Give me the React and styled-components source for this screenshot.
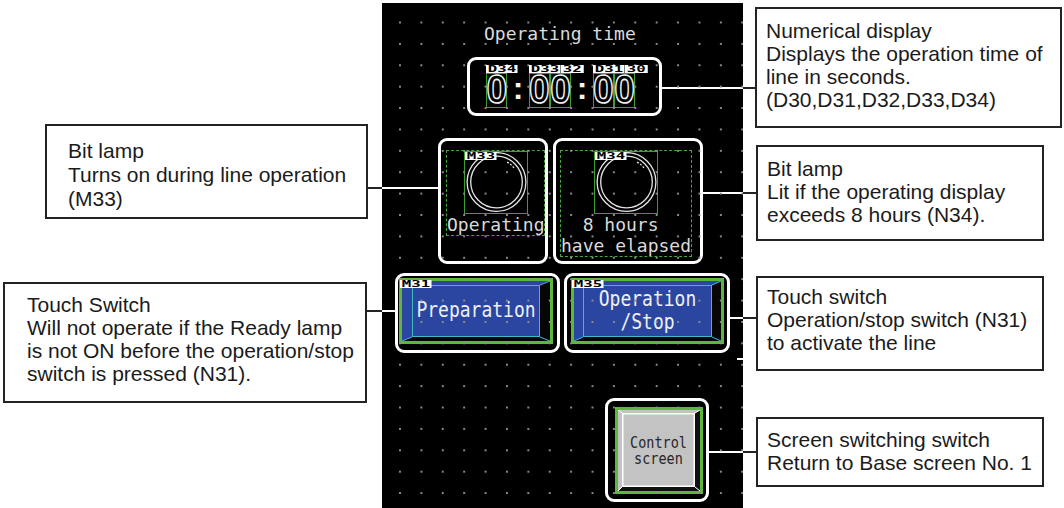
import React from 'react';
import styled, { createGlobalStyle } from 'styled-components';

const GlobalStyle = createGlobalStyle`
  html, body { margin: 0; padding: 0; background: #ffffff; }
  #root { width: 1064px; height: 508px; }
`;

const Page = styled.div`
  width: 1064px;
  height: 508px;
  overflow: hidden;
  background: #ffffff;
  display: grid;
  grid-template-columns: 382px 361px 321px;
  align-items: start;
`;

/* ---------- callout notes ---------- */

const NoteColumn = styled.div`
  display: flex;
  flex-direction: column;
  align-items: flex-start;
`;

const Note = styled.div`
  position: relative;
  box-sizing: border-box;
  width: ${p => p.$w}px;
  height: ${p => p.$h}px;
  margin: ${p => p.$mt}px 0 0 ${p => p.$ml}px;
  padding: ${p => p.$pt}px 0 0 ${p => p.$pl}px;
  border: 2px solid #232323;
  background: #ffffff;
  font-family: "Liberation Sans", Arial, sans-serif;
  font-size: 21px;
  line-height: ${p => p.$lh || 23}px;
  color: #1b1b1b;
  white-space: nowrap;

  &::after {
    content: "";
    position: absolute;
    top: ${p => p.$leadY}px;
    ${p => (p.$exit === 'right' ? 'left: calc(100% + 2px);' : 'right: calc(100% + 2px);')}
    width: ${p => p.$leadLen}px;
    height: 2px;
    background: #232323;
  }
`;

const NoteLine = styled.div``;

/* ---------- HMI screen ---------- */

const Panel = styled.div`
  position: relative;
  margin-top: 3px;
  height: 505px;
  background: #000000;
  display: flex;
  flex-direction: column;
  align-items: flex-start;
  font-family: "DejaVu Sans Mono", "Liberation Mono", monospace;
  color: #dadada;

  &::before {
    content: "";
    position: absolute;
    inset: 0;
    z-index: 2;
    pointer-events: none;
    background-image: radial-gradient(circle, #8c8c8c 0 0.9px, transparent 1.2px);
    background-size: 21.4px 21.4px;
    background-position: 7.3px 8.8px;
  }
`;

const ScreenTitle = styled.div`
  margin: 20px 0 0 102px;
  font-size: 18px;
  line-height: 21.33px;
  white-space: pre;
`;

const Slot = styled.div`
  position: relative;
  display: flex;
  align-items: flex-start;
  gap: ${p => p.$gap || 0}px;
  margin: ${p => p.$mt}px 0 0 ${p => p.$ml}px;

  ${p =>
    p.$stub
      ? `&::after {
    content: "";
    position: absolute;
    left: 342px;
    top: 85px;
    width: 6px;
    height: 2px;
    background: #ffffff;
  }`
      : ''}
`;

const Highlight = styled.div`
  position: relative;
  box-sizing: border-box;
  width: ${p => p.$w}px;
  height: ${p => p.$h}px;
  border: 3px solid #ffffff;
  border-radius: 9px;
  padding: ${p => p.$pad};
  display: flex;
  flex-direction: column;
  align-items: flex-start;

  &::after {
    content: "";
    position: absolute;
    top: ${p => p.$leadY}px;
    ${p => (p.$exit === 'right' ? 'left: calc(100% + 3px);' : 'right: calc(100% + 3px);')}
    width: ${p => p.$leadLen}px;
    height: 2px;
    background: #ffffff;
  }
`;

const Tag = styled.span`
  position: absolute;
  left: ${p => p.$x}px;
  top: ${p => p.$y}px;
  z-index: ${p => p.$z || 3};
  height: 8px;
  padding: 0 1px;
  background: #ffffff;
  color: #000000;
  font-family: "DejaVu Sans Mono", monospace;
  font-weight: bold;
  font-size: 9px;
  line-height: 8px;
  white-space: nowrap;
  transform: scaleX(1.75);
  transform-origin: left top;
`;

/* numerical display */

const DigitRow = styled.div`
  display: flex;
  align-items: flex-start;
`;

const DigitCell = styled.div`
  position: relative;
  box-sizing: border-box;
  width: 21.33px;
  height: 35px;
  border: 1px solid #3d9e33;
  display: flex;
  justify-content: center;
  align-items: flex-start;
`;

const DigitGlyph = styled.span`
  display: block;
  font-family: "Liberation Sans", Arial, sans-serif;
  font-weight: bold;
  font-size: 37px;
  line-height: 28px;
  color: transparent;
  -webkit-text-stroke: 1.4px #f2f2f2;
  transform: scaleY(1.1);
  transform-origin: center top;
`;

const ColonCell = styled.div`
  width: 21.33px;
  height: 35px;
  display: flex;
  justify-content: center;
  align-items: flex-start;
`;

const ColonGlyph = styled.span`
  display: block;
  margin-top: -1px;
  font-family: "Liberation Sans", Arial, sans-serif;
  font-weight: bold;
  font-size: 32px;
  line-height: 32px;
  color: #f4f4f4;
`;

/* lamps */

const LampFrame = styled.div`
  box-sizing: border-box;
  width: ${p => p.$w}px;
  height: ${p => p.$h}px;
  border: 1px dashed #45a83a;
  display: flex;
  flex-direction: column;
`;

const LampBody = styled.div`
  position: relative;
  align-self: center;
  box-sizing: border-box;
  width: 64px;
  height: 63px;
  border: 1px solid #3d9e33;
`;

const RingSvg = styled.svg`
  display: block;
`;

const LampCaption = styled.div`
  font-size: 18px;
  line-height: 21.33px;
  white-space: pre;
`;

/* touch switches */

const GreenFrame = styled.div`
  position: relative;
  box-sizing: border-box;
  width: ${p => p.$w}px;
  height: ${p => p.$h}px;
  border: 3px solid #5bb83b;
`;

const Bevel = styled.div`
  position: relative;
  ${p => (p.$raise ? 'z-index: 3;' : '')}
  box-sizing: border-box;
  width: 100%;
  height: 100%;
  padding: ${p => p.$pad};
  background: ${p => p.$face};
  display: flex;
`;

const BevelSvg = styled.svg`
  position: absolute;
  left: 0;
  top: 0;
  display: block;
`;

const FaceText = styled.div`
  position: relative;
  flex: 1;
  display: flex;
  align-items: center;
  justify-content: center;
  text-align: center;
  white-space: pre;
`;

const FaceLabel = styled.span`
  display: block;
  font-size: ${p => p.$size}px;
  line-height: ${p => p.$lh}px;
  color: ${p => p.$color};
  transform: scaleY(${p => p.$sy});
`;

const BevelArt = ({ w, h, l, t, r, b, dark, line, lw }) => (
  <BevelSvg width={w} height={h} viewBox={`0 0 ${w} ${h}`}>
    <polygon points={`${w},0 ${w},${h} ${w - r},${h - b} ${w - r},${t}`} fill={dark} />
    <polygon points={`0,${h} ${l},${h - b} ${w - r},${h - b} ${w},${h}`} fill={dark} />
    <rect
      x={l + lw / 2}
      y={t + lw / 2}
      width={w - l - r - lw}
      height={h - t - b - lw}
      fill="none"
      stroke={line}
      strokeWidth={lw}
    />
    <g stroke={line} strokeWidth="1">
      <line x1="0" y1="0" x2={l} y2={t} />
      <line x1={w} y1="0" x2={w - r} y2={t} />
      <line x1="0" y1={h} x2={l} y2={h - b} />
      <line x1={w} y1={h} x2={w - r} y2={h - b} />
    </g>
  </BevelSvg>
);

const LampRing = () => (
  <RingSvg width="62" height="61" viewBox="0 0 62 61">
    <circle cx="31.5" cy="30" r="29.4" fill="none" stroke="#e4e4e4" strokeWidth="1.3" />
    <circle cx="31.5" cy="30" r="25.8" fill="none" stroke="#e4e4e4" strokeWidth="1.3" />
    <path
      d="M42.1 10.1 A22.5 22.5 0 0 1 49.2 16.2"
      fill="none"
      stroke="#e4e4e4"
      strokeWidth="1.3"
      strokeDasharray="2 1.5"
    />
  </RingSvg>
);

const Lamp = ({ w, h, tag, caption }) => (
  <LampFrame $w={w} $h={h}>
    <LampBody>
      <LampRing />
      <Tag $x={0} $y={0}>{tag}</Tag>
    </LampBody>
    <LampCaption>{caption}</LampCaption>
  </LampFrame>
);

/* device tags over the digit cells; where two tags overlap in the
   screen, the covered one only shows its visible tail */
const digits = [
  { kind: 'digit', tag: 'D34', x: -1 },
  { kind: 'colon' },
  { kind: 'digit', tag: 'D33', x: -1 },
  { kind: 'digit', tag: '32', x: 10 },
  { kind: 'colon' },
  { kind: 'digit', tag: 'D31', x: -1 },
  { kind: 'digit', tag: '30', x: 10 },
];

const blueBevel = { dark: '#060606', line: '#42b7c6', lw: 1 };

export default function App() {
  return (
    <>
      <GlobalStyle />
      <Page>
        <NoteColumn>
          <Note $w={323} $h={95} $mt={124} $ml={45} $pt={13} $pl={21} $lh={24}
            $exit="right" $leadY={61} $leadLen={14}>
            <NoteLine>Bit lamp</NoteLine>
            <NoteLine>Turns on during line operation</NoteLine>
            <NoteLine>(M33)</NoteLine>
          </Note>
          <Note $w={364} $h={121} $mt={63} $ml={3} $pt={9} $pl={22}
            $exit="right" $leadY={26} $leadLen={15}>
            <NoteLine>Touch Switch</NoteLine>
            <NoteLine>Will not operate if the Ready lamp</NoteLine>
            <NoteLine>is not ON before the operation/stop</NoteLine>
            <NoteLine>switch is pressed (N31).</NoteLine>
          </Note>
        </NoteColumn>

        <Panel>
          <ScreenTitle>Operating time</ScreenTitle>

          <Slot $mt={12.5} $ml={85}>
            <Highlight $w={195} $h={59} $pad="13px 0 0 16px" $exit="right" $leadY={27} $leadLen={81}>
              <DigitRow>
                {digits.map((d, i) =>
                  d.kind === 'colon' ? (
                    <ColonCell key={i}>
                      <ColonGlyph>:</ColonGlyph>
                    </ColonCell>
                  ) : (
                    <DigitCell key={i}>
                      <DigitGlyph>0</DigitGlyph>
                      <Tag $x={d.x} $y={-9}>{d.tag}</Tag>
                    </DigitCell>
                  )
                )}
              </DigitRow>
            </Highlight>
          </Slot>

          <Slot $mt={22} $ml={56} $gap={5}>
            <Highlight $w={110} $h={126} $pad="9px 0 0 5px" $exit="left" $leadY={46} $leadLen={56}>
              <Lamp w={99} h={86} tag="M33" caption="Operating" />
            </Highlight>
            <Highlight $w={150} $h={126} $pad="9px 0 0 4px" $exit="right" $leadY={51} $leadLen={40}>
              <Lamp w={132} h={107} tag="M34" caption={'  8 hours\nhave elapsed'} />
            </Highlight>
          </Slot>

          <Slot $mt={9} $ml={13} $gap={4} $stub>
            <Highlight $w={165} $h={80} $pad="2px 0 0 1px" $exit="left" $leadY={34} $leadLen={13}>
              <GreenFrame $w={154} $h={66}>
                <Bevel $pad="4px 10px 4px 10px" $face="#2a46a1">
                  <BevelArt w={148} h={60} l={10} t={4} r={10} b={4} {...blueBevel} />
                  <FaceText>
                    <FaceLabel $size={18} $lh={18.67} $sy={1.18} $color="#f0f0f0">Preparation</FaceLabel>
                  </FaceText>
                </Bevel>
                <Tag $x={-2} $y={-1}>M31</Tag>
              </GreenFrame>
            </Highlight>
            <Highlight $w={166} $h={80} $pad="2px 0 0 4px" $exit="right" $leadY={41} $leadLen={13}>
              <GreenFrame $w={153} $h={66}>
                <Bevel $pad="4px 9px 4px 9px" $face="#2a46a1">
                  <BevelArt w={147} h={60} l={9} t={4} r={9} b={4} {...blueBevel} />
                  <FaceText>
                    <FaceLabel $size={18} $lh={18.67} $sy={1.18} $color="#f0f0f0">{'Operation\n/Stop'}</FaceLabel>
                  </FaceText>
                </Bevel>
                <Tag $x={-2} $y={-1}>M35</Tag>
              </GreenFrame>
            </Highlight>
          </Slot>

          <Slot $mt={45} $ml={223}>
            <Highlight $w={104} $h={104} $pad="6px 0 0 7px" $exit="right" $leadY={50} $leadLen={34}>
              <GreenFrame $w={88} $h={87}>
                <Bevel $pad="3px 5px 4px 4px" $face="#c3c3c3" $raise>
                  <BevelArt w={82} h={81} l={4} t={3} r={5} b={4} dark="#101010" line="#ffffff" lw={1.5} />
                  <FaceText>
                    <FaceLabel $size={13.5} $lh={14.2} $sy={1.2} $color="#262626">{'Control\nscreen'}</FaceLabel>
                  </FaceText>
                </Bevel>
              </GreenFrame>
            </Highlight>
          </Slot>
        </Panel>

        <NoteColumn>
          <Note $w={307} $h={121} $mt={7} $ml={12} $pt={10} $pl={9}
            $exit="left" $leadY={78} $leadLen={12}>
            <NoteLine>Numerical display</NoteLine>
            <NoteLine>Displays the operation time of</NoteLine>
            <NoteLine>line in seconds.</NoteLine>
            <NoteLine>(D30,D31,D32,D33,D34)</NoteLine>
          </Note>
          <Note $w={288} $h={96} $mt={17} $ml={13} $pt={10} $pl={9}
            $exit="left" $leadY={45} $leadLen={13}>
            <NoteLine>Bit lamp</NoteLine>
            <NoteLine>Lit if the operating display</NoteLine>
            <NoteLine>exceeds 8 hours (N34).</NoteLine>
          </Note>
          <Note $w={288} $h={95} $mt={35} $ml={13} $pt={7} $pl={9}
            $exit="left" $leadY={39} $leadLen={13}>
            <NoteLine>Touch switch</NoteLine>
            <NoteLine>Operation/stop switch (N31)</NoteLine>
            <NoteLine>to activate the line</NoteLine>
          </Note>
          <Note $w={288} $h={70} $mt={46} $ml={13} $pt={9} $pl={9}
            $exit="left" $leadY={32} $leadLen={13}>
            <NoteLine>Screen switching switch</NoteLine>
            <NoteLine>Return to Base screen No. 1</NoteLine>
          </Note>
        </NoteColumn>
      </Page>
    </>
  );
}
